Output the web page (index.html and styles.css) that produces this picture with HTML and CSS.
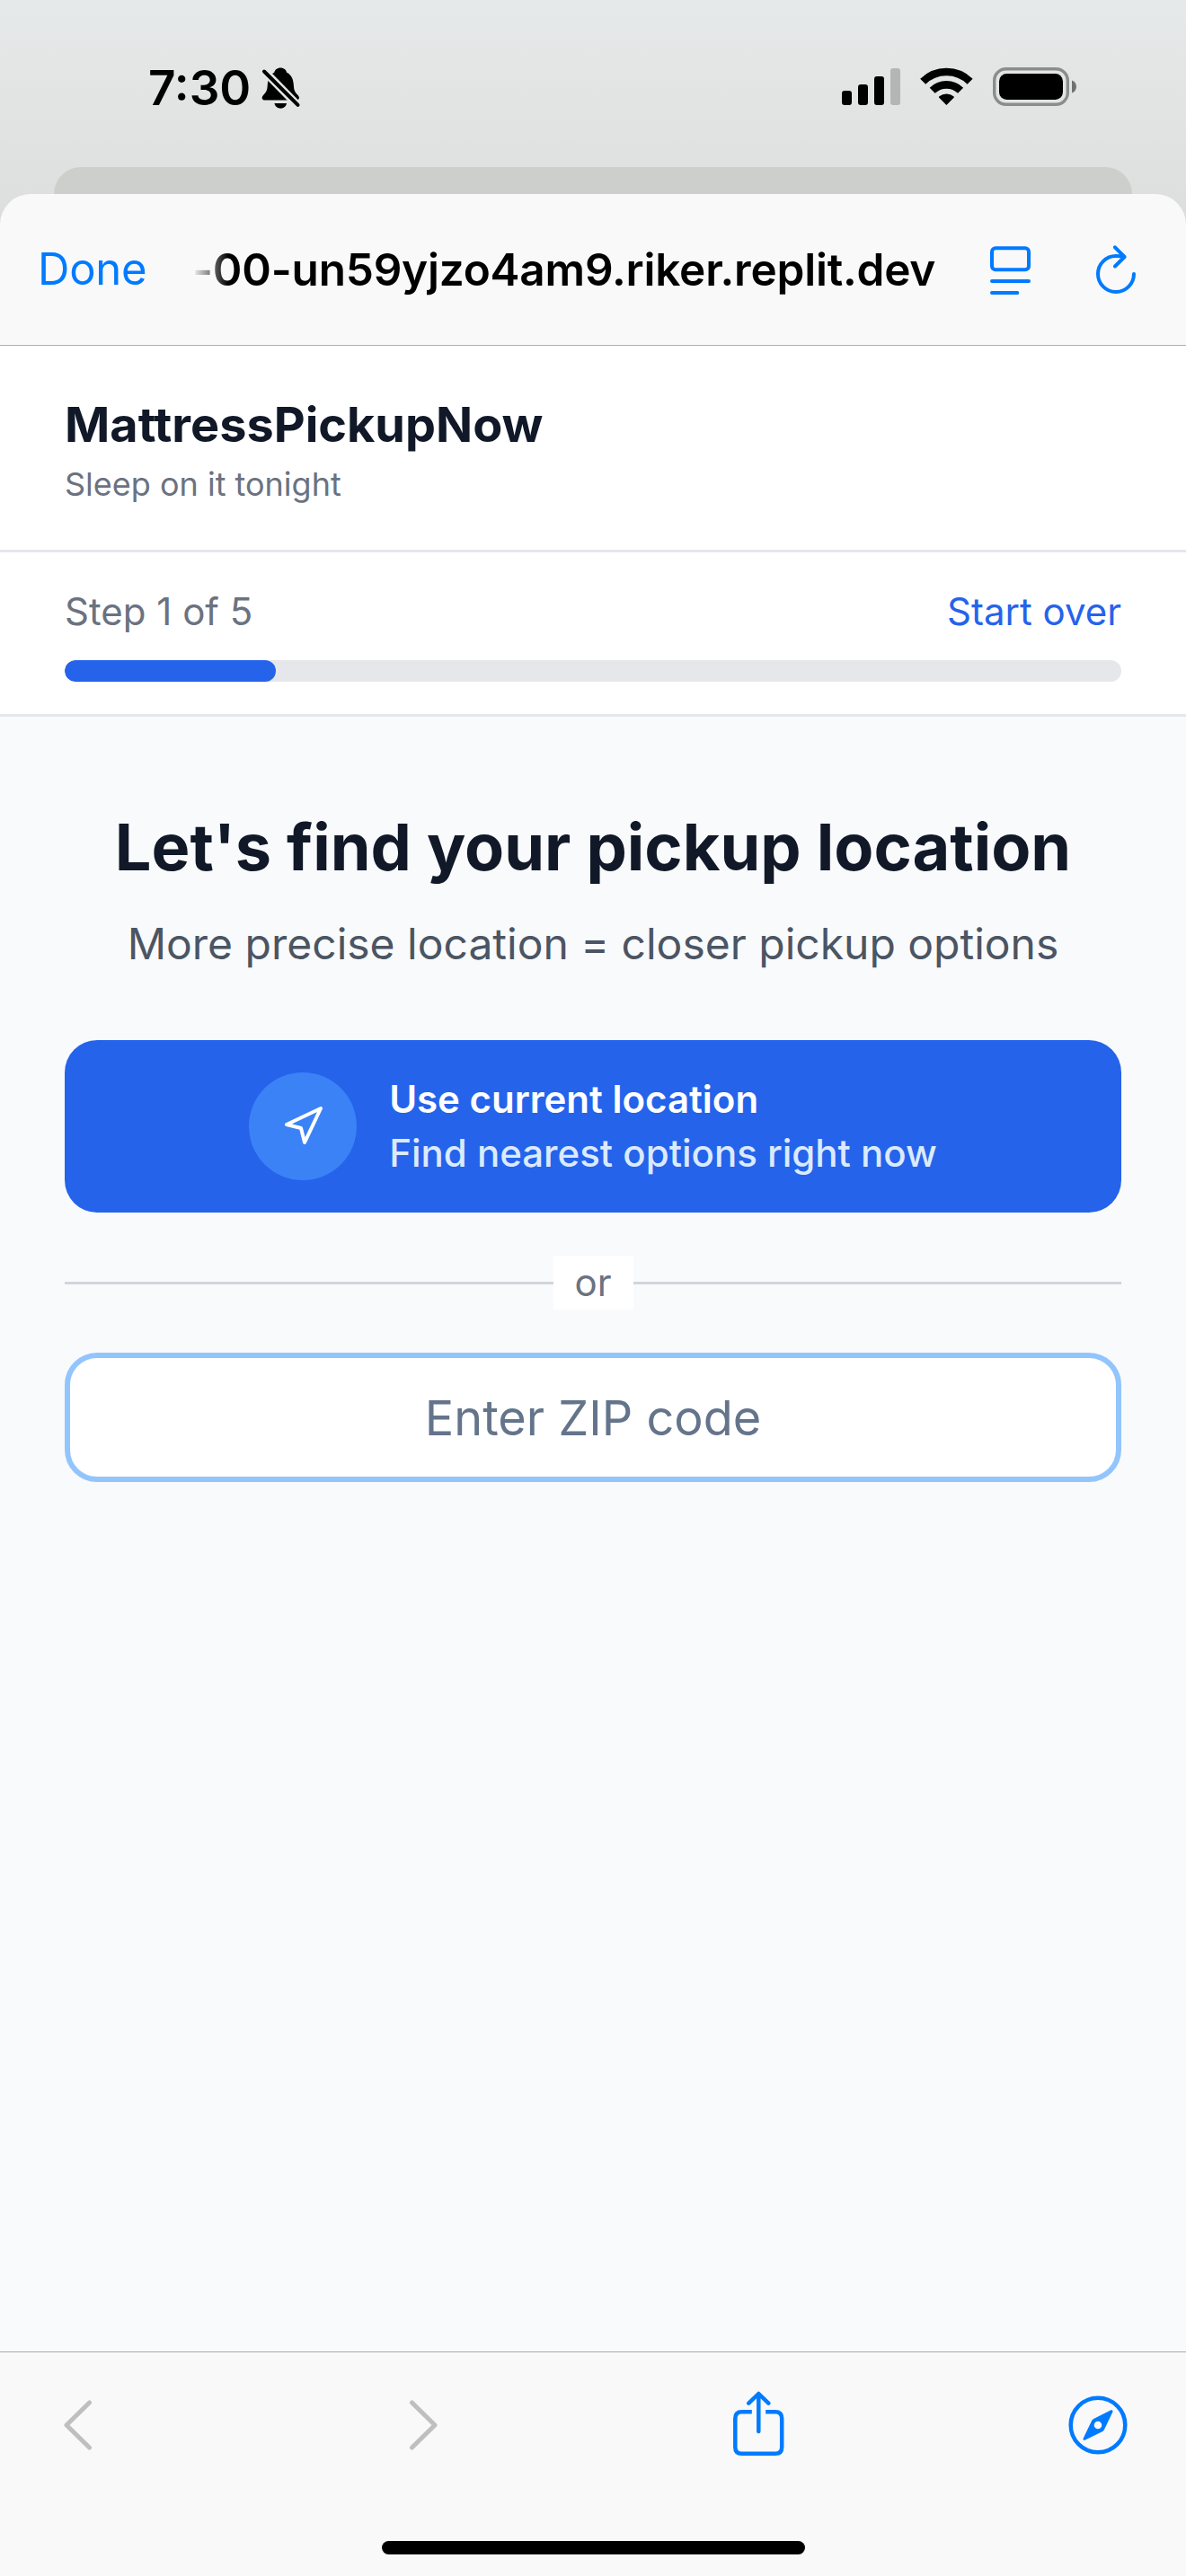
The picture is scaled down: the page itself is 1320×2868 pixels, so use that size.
FILE: index.html
```html
<!DOCTYPE html>
<html lang="en">
<head>
<meta charset="utf-8">
<meta name="viewport" content="width=device-width, initial-scale=1">
<title>MattressPickupNow</title>
<link rel="stylesheet" href="styles.css">
</head>
<body>
<div class="screen">
  <div class="status">
    <div class="status-left">
      <span class="time">7:30</span>
      <svg class="bell" width="44" height="48" viewBox="291 74 44 48">
        <mask id="cut" maskUnits="userSpaceOnUse" x="291" y="74" width="44" height="48">
          <rect x="291" y="74" width="44" height="48" fill="#fff"/>
          <path d="M288 73L338 124" stroke="#000" stroke-width="9"/>
        </mask>
        <g mask="url(#cut)">
          <path d="M312.200 75.500c3.800 0 6.300 2.400 7 5.200c5.400 2.600 7.300 7.600 7.700 14.500c.3 5.200 1.200 7.300 4.700 10.800c2.400 2.500 1.400 5.500-1.900 5.500H294.900c-3.400 0-4.300-3-1.900-5.500c3.400-3.500 4.400-5.600 4.700-10.800c.4-6.900 2.300-11.900 7.500-14.500c.7-2.800 3.200-5.200 7-5.200z"/>
          <path d="M305.500 115h13.500c-.4 3.300-3.300 5.700-6.700 5.700s-6.400-2.400-6.800-5.700z"/>
        </g>
        <path d="M294 79.500L331.500 116.800" stroke="#000" stroke-width="4" stroke-linecap="round"/>
      </svg>
    </div>
    <svg class="indicators" width="264" height="46" viewBox="936 73 264 46">
      <rect x="937" y="101" width="11" height="16" rx="3"/>
      <rect x="955" y="94" width="11" height="23" rx="3"/>
      <rect x="973" y="85" width="11" height="32" rx="3"/>
      <rect x="991" y="76" width="11" height="41" rx="3" fill="#b4b6b5"/>
      <path d="M1053.400 117L1045.200 108.800Q1044.500 108 1045.400 107.300A12.500 12.500 0 0 1 1061.400 107.300Q1062.300 108 1061.600 108.800Z"/>
      <path d="M1037.700 100.800A22.400 22.400 0 0 1 1069.100 100.800" fill="none" stroke="#000" stroke-width="8.600"/>
      <path d="M1027.200 90.700A37.300 37.300 0 0 1 1079.600 90.700" fill="none" stroke="#000" stroke-width="8.600"/>
      <rect x="1106.700" y="76.700" width="81.600" height="39.600" rx="13" fill="none" stroke="#8b8d8c" stroke-width="3.400"/>
      <rect x="1112" y="82" width="71" height="29" rx="8.500"/>
      <path d="M1193 89.500c3 .9 5 3.700 5 7s-2 6.100-5 7z" fill="#707271"/>
    </svg>
  </div>
  <div class="behind"></div>
  <div class="sheet">
    <div class="navbar">
      <span class="done">Done</span>
      <div class="address"><span class="url">-00-un59yjzo4am9.riker.replit.dev</span></div>
      <div class="nav-icons">
        <svg width="46" height="55" viewBox="1101 273 46 55" fill="none" stroke="#007aff" stroke-width="4" stroke-linecap="round">
          <rect x="1103" y="276.300" width="41" height="24" rx="4"/>
          <path d="M1103 313h41M1103 326h28.300"/>
        </svg>
        <svg width="46" height="55" viewBox="1218 273 46 55" fill="none" stroke="#007aff" stroke-width="4" stroke-linecap="round" stroke-linejoin="round">
          <path d="M1261 305A20 20 0 1 1 1241 285Q1246 285 1250 286"/>
          <path d="M1240 275.300L1250.500 286L1240 296.500"/>
        </svg>
      </div>
    </div>
    <header class="header">
      <h1 class="brand">MattressPickupNow</h1>
      <p class="tagline">Sleep on it tonight</p>
    </header>
    <section class="progress">
      <div class="progress-row">
        <span class="step">Step 1 of 5</span>
        <a class="restart">Start over</a>
      </div>
      <div class="track"><div class="fill" style="width: 20%"></div></div>
    </section>
    <main class="main">
      <h2 class="heading">Let's find your pickup location</h2>
      <p class="lead">More precise location = closer pickup options</p>
      <button class="locate">
        <span class="locate-icon">
          <svg width="48" height="48" viewBox="0 0 24 24" fill="none" stroke="#fff" stroke-width="2" stroke-linecap="round" stroke-linejoin="round"><polygon points="3 11 22 2 13 21 11 13 3 11"/></svg>
        </span>
        <span class="locate-text">
          <span class="locate-title">Use current location</span>
          <span class="locate-sub">Find nearest options right now</span>
        </span>
      </button>
      <div class="divider"><span class="or">or</span></div>
      <div class="zip"><span class="placeholder">Enter ZIP code</span></div>
    </main>
    <footer class="toolbar">
      <div class="tools">
        <svg width="33" height="58" viewBox="70 2671 33 58" fill="none" stroke="#bfbfbf" stroke-width="5" stroke-linecap="round" stroke-linejoin="round"><path d="M99.500 2675L74 2700L99.500 2725"/></svg>
        <svg width="33" height="58" viewBox="455 2671 33 58" fill="none" stroke="#bfbfbf" stroke-width="5" stroke-linecap="round" stroke-linejoin="round"><path d="M458.500 2675L484 2700L458.500 2725"/></svg>
        <svg width="58" height="76" viewBox="815 2662 58 76" fill="none" stroke="#007aff" stroke-width="4.500" stroke-linecap="round" stroke-linejoin="round">
          <path stroke-linecap="butt" d="M836.800 2685.200H825.500Q818.300 2685.200 818.300 2692.500V2724.500Q818.300 2731.800 825.500 2731.800H863Q870.200 2731.800 870.200 2724.500V2692.500Q870.200 2685.200 863 2685.200H852.200"/>
          <path d="M844.300 2707V2665.500M833.300 2675.700L844.300 2665L855.300 2675.700"/>
        </svg>
        <svg width="66" height="66" viewBox="1188.500 2666.500 66 66">
          <circle cx="1221.500" cy="2699.500" r="30.300" fill="none" stroke="#007aff" stroke-width="4.500"/>
          <path fill="#007aff" fill-rule="evenodd" d="M1235.500 2683.100C1237.400 2682.100 1238.600 2683.300 1237.700 2685.200L1228.500 2704.500Q1227.800 2706 1226.300 2706.800L1207.400 2716C1205.500 2716.900 1204.400 2715.800 1205.300 2713.900L1214.400 2695Q1215.200 2693.300 1216.700 2692.500ZM1221.500 2695.200A4.300 4.300 0 1 0 1221.500 2703.800A4.300 4.300 0 1 0 1221.500 2695.200Z"/>
        </svg>
      </div>
      <div class="home"></div>
    </footer>
  </div>
</div>
</body>
</html>
```
FILE: styles.css
```css
* { box-sizing: border-box; margin: 0; padding: 0; }

body {
  width: 1320px;
  font-family: Inter, "Liberation Sans", sans-serif;
  -webkit-font-smoothing: antialiased;
}

.screen {
  display: flex;
  flex-direction: column;
  height: 2868px;
  overflow: hidden;
  background: linear-gradient(#e6e9ea 0, #e4e6e5 70px, #dde0de 216px, #dadddb 260px);
}

/* Status bar */
.status {
  display: flex;
  justify-content: space-between;
  align-items: flex-start;
  height: 186px;
  padding: 73px 120px 0 165px;
}
.status-left { display: flex; align-items: flex-start; gap: 12px; }
.time { font-size: 53px; font-weight: 600; line-height: 50px; }
.bell { margin-top: 1px; }

.behind {
  height: 30px;
  margin: 0 60px;
  border-radius: 30px 30px 0 0;
  background: #cdcfcc;
}

.sheet {
  display: flex;
  flex-direction: column;
  flex: 1;
  overflow: hidden;
  border-radius: 34px 34px 0 0;
  background: #f9f9f9;
}

/* Browser bar */
.navbar {
  display: flex;
  align-items: center;
  height: 169px;
  padding: 0 55px 0 42px;
  border-bottom: 1px solid #b0b0b0;
}
.done { width: 172px; font-size: 49px; line-height: 60px; letter-spacing: -0.200px; color: #007aff; }
.address {
  flex: 1;
  white-space: nowrap;
  -webkit-mask-image: linear-gradient(90deg, transparent, #000 40px);
  mask-image: linear-gradient(90deg, transparent, #000 40px);
}
.url { font-size: 49.500px; font-weight: 600; line-height: 60px; letter-spacing: -0.210px; }
.nav-icons { display: flex; gap: 71px; }

/* App header */
.header {
  height: 230px;
  padding: 46px 72px 0;
  border-bottom: 3px solid #e5e7eb;
  background: #fff;
}
.brand { font-size: 54px; font-weight: 700; line-height: 84px; color: #111827; }
.tagline { font-size: 36px; line-height: 48px; color: #6b7280; }

.progress {
  height: 183px;
  padding: 36px 72px;
  border-bottom: 3px solid #e5e7eb;
  background: #fff;
}
.progress-row {
  display: flex;
  justify-content: space-between;
  margin-bottom: 24px;
  font-size: 42px;
  line-height: 60px;
}
.step { color: #6b7280; }
.restart { color: #2563eb; }
.track { height: 24px; border-radius: 12px; background: #e5e7eb; overflow: hidden; }
.fill { height: 100%; border-radius: 12px; background: #2563eb; }

/* Location step */
.main { flex: 1; padding: 97px 72px 0; background: #f9fafc; text-align: center; }
.heading { margin-bottom: 24px; font-size: 72px; font-weight: 700; line-height: 96px; color: #111827; white-space: nowrap; }
.lead { margin-bottom: 71px; font-size: 48px; line-height: 72px; color: #4b5563; white-space: nowrap; }
.locate {
  display: flex;
  justify-content: center;
  align-items: center;
  gap: 36px;
  width: 100%;
  height: 192px;
  border: 0;
  border-radius: 36px;
  background: #2563eb;
  font: inherit;
}
.locate-icon {
  display: flex;
  align-items: center;
  justify-content: center;
  width: 120px;
  height: 120px;
  border-radius: 50%;
  background: #3b82f6;
}
.locate-text { display: flex; flex-direction: column; font-size: 42px; line-height: 60px; text-align: left; }
.locate-title { font-weight: 600; color: #fff; }
.locate-sub { font-weight: 500; color: #dbeafe; }

.divider {
  display: flex;
  align-items: center;
  margin: 48px 0;
}
.divider::before, .divider::after { content: ""; flex: 1; height: 3px; background: #d1d5db; }
.or { padding: 0 24px; background: #fff; font-size: 42px; line-height: 60px; color: #6b7280; }

.zip {
  display: flex;
  align-items: center;
  justify-content: center;
  height: 144px;
  padding-top: 2px;
  border: 6px solid #93c5fd;
  border-radius: 36px;
  background: #fff;
}
.placeholder { font-size: 54px; line-height: 84px; color: #64748b; }

/* Browser toolbar */
.toolbar {
  display: flex;
  flex-direction: column;
  align-items: center;
  justify-content: space-between;
  height: 250px;
  padding: 43px 0 24px;
  border-top: 1px solid #a9abad;
}
.tools {
  display: grid;
  grid-template-columns: 385px 360px 373.500px 66px;
  align-items: center;
  width: 100%;
  height: 76px;
  padding-left: 70px;
}
.home { width: 471px; height: 15px; border-radius: 8px; background: #000; }
```
